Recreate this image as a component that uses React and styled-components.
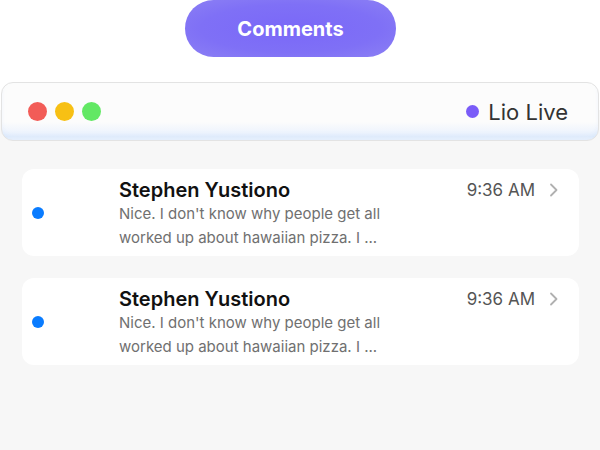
import React from "react";
import styled, { createGlobalStyle } from "styled-components";

const GlobalStyle = createGlobalStyle`
  html, body {
    margin: 0;
    padding: 0;
    background: #f7f7f7;
    font-family: Inter, "Noto Sans", sans-serif;
  }
`;

const messages = [
  {
    id: 1,
    name: "Stephen Yustiono",
    time: "9:36 AM",
    text: "Nice. I don't know why people get all worked up about hawaiian pizza. I ...",
  },
  {
    id: 2,
    name: "Stephen Yustiono",
    time: "9:36 AM",
    text: "Nice. I don't know why people get all worked up about hawaiian pizza. I ...",
  },
];

function App() {
  return (
    <Page>
      <GlobalStyle />
      <Header>
        <PillButton>Comments</PillButton>
        <WindowBar>
          <Lights>
            <Light color="#f25c57" />
            <Light color="#f7c014" />
            <Light color="#62e864" />
          </Lights>
          <Live>
            <LiveDot />
            Lio Live
          </Live>
        </WindowBar>
      </Header>
      <List>
        {messages.map((m) => (
          <Card key={m.id}>
            <UnreadCol>
              <Unread />
            </UnreadCol>
            <Body>
              <Name>{m.name}</Name>
              <Preview>{m.text}</Preview>
            </Body>
            <Meta>
              <Time>{m.time}</Time>
              <svg width="11" height="16" viewBox="0 0 11 16" fill="none">
                <path
                  d="M3 2.5 L8.5 8 L3 13.5"
                  stroke="#b0b0b0"
                  strokeWidth="1.8"
                  strokeLinecap="round"
                  strokeLinejoin="round"
                />
              </svg>
            </Meta>
          </Card>
        ))}
      </List>
    </Page>
  );
}

export default App;

const Page = styled.div`
  width: 600px;
  height: 450px;
  overflow: hidden;
  background: #f7f7f7;
`;

const Header = styled.div`
  background: linear-gradient(#ffffff 0, #ffffff 110px, #f7f7f7 110px);
  display: flex;
  flex-direction: column;
  align-items: flex-start;
  padding: 0 1px;
`;

const PillButton = styled.div`
  width: 211px;
  height: 57px;
  border-radius: 29px;
  background: radial-gradient(ellipse at center, #7a68f8 0%, #7f70f6 60%, #8c80f4 100%);
  color: #fff;
  font-size: 20px;
  font-weight: 700;
  display: flex;
  align-items: center;
  justify-content: center;
  margin-left: 184px;
`;

const WindowBar = styled.div`
  margin-top: 25px;
  box-sizing: border-box;
  width: 598px;
  height: 59px;
  border: 1px solid #e3e3e3;
  border-radius: 12px;
  background: linear-gradient(#fcfcfc 0, #fcfcfc 68%, #f0f5fd 84%, #e3eefc 94%, #f6f9fe 100%);
  box-shadow: inset 0 -4px 6px -3px rgba(200, 220, 250, 0.6);
  display: flex;
  align-items: center;
  justify-content: space-between;
  padding: 0 30px 0 26px;
`;

const Lights = styled.div`
  display: flex;
  gap: 8px;
`;

const Light = styled.span`
  width: 19px;
  height: 19px;
  border-radius: 50%;
  background: ${(p) => p.color};
`;

const Live = styled.div`
  display: flex;
  align-items: center;
  gap: 9px;
  font-size: 22px;
  color: #333;
`;

const LiveDot = styled.span`
  width: 13px;
  height: 13px;
  border-radius: 50%;
  background: #7a5cf8;
`;

const List = styled.div`
  display: flex;
  flex-direction: column;
  gap: 22px;
  padding: 28px 21px 0 22px;
`;

const Card = styled.div`
  background: #fff;
  border-radius: 12px;
  height: 87px;
  box-sizing: border-box;
  display: flex;
  padding: 9px 20px 0 0;
`;

const UnreadCol = styled.div`
  width: 97px;
  display: flex;
  align-items: center;
  padding-left: 10px;
  box-sizing: border-box;
  margin-top: -9px;
`;

const Unread = styled.span`
  width: 12px;
  height: 12px;
  border-radius: 50%;
  background: #0a7cff;
`;

const Body = styled.div`
  flex: 1;
`;

const Name = styled.div`
  font-size: 20px;
  font-weight: 600;
  line-height: 24px;
  color: #111;
`;

const Preview = styled.div`
  width: 275px;
  font-size: 15px;
  line-height: 24px;
  color: #707070;
`;

const Meta = styled.div`
  display: flex;
  gap: 13px;
  height: 24px;
  align-items: center;
`;

const Time = styled.span`
  font-size: 17px;
  color: #555;
`;
